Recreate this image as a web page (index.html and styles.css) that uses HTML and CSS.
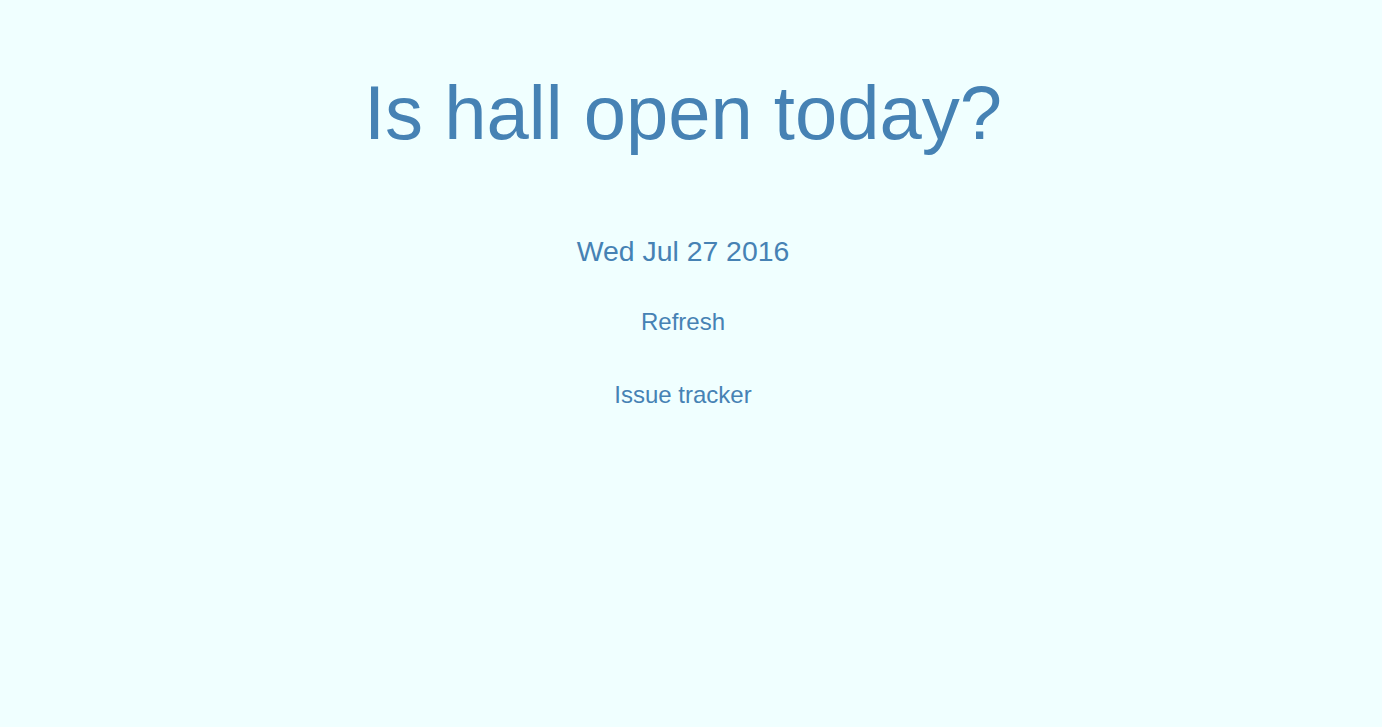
FILE: index.html
```html
<!DOCTYPE html>
<html lang="en">
<head>
<meta charset="utf-8">
<title>Is hall open today?</title>
<link rel="stylesheet" href="styles.css">
</head>
<body>
<main class="page">
  <h1 class="title">Is hall open today?</h1>
  <p class="date">Wed Jul 27 2016</p>
  <a class="link link-refresh" href="#">Refresh</a>
  <a class="link link-issues" href="#">Issue tracker</a>
</main>
</body>
</html>
```
FILE: styles.css
```css
html, body {
  margin: 0;
  padding: 0;
  background: #f0ffff;
  height: 100%;
}
body {
  font-family: "Liberation Sans", Arial, sans-serif;
  color: #4682b4;
}
.page {
  display: flex;
  flex-direction: column;
  align-items: center;
  padding-top: 67px;
  padding-right: 16px;
}
.title {
  margin: 0;
  font-size: 76px;
  font-weight: normal;
  line-height: 1.2;
}
.date {
  margin: 76px 0 0;
  font-size: 28.4px;
  line-height: 1.2;
}
.link {
  color: #4682b4;
  text-decoration: none;
  font-size: 24px;
  line-height: 1.2;
}
.link-refresh {
  margin-top: 40px;
}
.link-issues {
  margin-top: 44px;
}
```
